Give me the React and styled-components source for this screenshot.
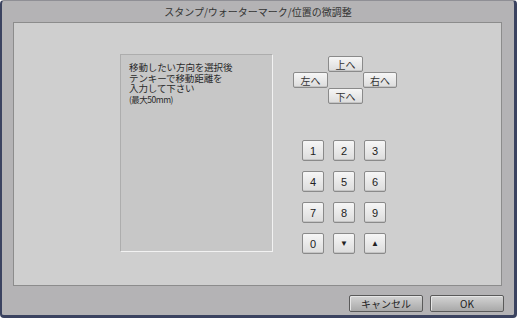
import React from 'react';
import styled, { createGlobalStyle } from 'styled-components';

const GlobalStyle = createGlobalStyle`
  html, body {
    margin: 0;
    padding: 0;
    background: #ffffff;
  }
  * { box-sizing: border-box; }
`;

const jp = `"Noto Sans CJK JP", "Noto Sans", sans-serif`;

const Window = styled.div`
  width: 517px;
  height: 318px;
  display: flex;
  flex-direction: column;
  background: #b4b3b5;
  border-left: 2px solid #3b4360;
  border-right: 3px solid #3b4360;
  border-bottom: 3px solid #3b4360;
  border-top: 1px solid #8f8f95;
  border-radius: 4px;
  font-family: ${jp};
`;

const TitleBar = styled.div`
  height: 21px;
  display: flex;
  align-items: center;
  justify-content: center;
  font-size: 10px;
  color: #333;
  padding-bottom: 1px;
`;

const Panel = styled.div`
  height: 264px;
  margin: 0 12px 0 11px;
  background: #cfcfcf;
  border: 1px solid #8c8c8c;
  display: flex;
  align-items: flex-start;
  padding: 31px 0 0 106px;
  gap: 20px;
`;

const InfoBox = styled.div`
  width: 153px;
  height: 198px;
  background: #c7c7c7;
  border: 1px solid;
  border-color: #adadad #f2f2f2 #f2f2f2 #adadad;
  padding: 7px 0 0 8px;
  color: #2a2a2a;
  letter-spacing: -0.3px;
`;

const InfoLine = styled.div`
  white-space: nowrap;
  height: 10.5px;
  font-size: ${p => (p.small ? '8.5px' : '9.5px')};
  line-height: 10.5px;
  letter-spacing: ${p => (p.small ? '-0.5px' : '-0.1px')};
`;

const Controls = styled.div`
  display: flex;
  flex-direction: column;
  padding-top: 2px;
`;

const DirGrid = styled.div`
  display: grid;
  grid-template-columns: 35px 35px 34px;
  grid-template-rows: 16px 16px 16px;
`;

const ButtonBase = styled.button`
  margin: 0;
  padding: 0;
  font-family: ${jp};
  color: #333;
  border: 1px solid #8a8a8a;
  border-radius: 2px;
  background: linear-gradient(#f6f6f6, #dcdcdc);
  box-shadow: inset 0 -1px 0 #c4c4c4;
  display: flex;
  align-items: center;
  justify-content: center;
  cursor: pointer;
`;

const DirButton = styled(ButtonBase)`
  grid-column: ${p => p.col};
  grid-row: ${p => p.row};
  height: 16px;
  font-size: 10px;
`;

const Keypad = styled.div`
  margin: 36px 0 0 9px;
  display: grid;
  grid-template-columns: repeat(3, 22px);
  grid-auto-rows: 21px;
  column-gap: 9px;
  row-gap: 10px;
`;

const Key = styled(ButtonBase)`
  font-family: "Liberation Sans", Arial, sans-serif;
  font-size: ${p => (p.arrow ? '8px' : '11px')};
  color: #222;
`;

const Footer = styled.div`
  flex: 1;
  display: flex;
  justify-content: flex-end;
  align-items: flex-start;
  gap: 7px;
  padding: 9px 10px 0 0;
`;

const FooterButton = styled.button`
  width: 74px;
  height: 17px;
  margin: 0;
  padding: 0;
  font-family: ${jp};
  font-size: 10px;
  color: #222;
  border: 1px solid #5a5a5a;
  border-radius: 2px;
  background: linear-gradient(#d4d4d4, #a8a8a8);
  box-shadow: inset 1px 1px 0 #e6e6e6;
  display: flex;
  align-items: center;
  justify-content: center;
`;

const keys = ['1', '2', '3', '4', '5', '6', '7', '8', '9', '0'];

function App() {
  return (
    <>
      <GlobalStyle />
      <Window>
        <TitleBar>スタンプ/ウォーターマーク/位置の微調整</TitleBar>
        <Panel>
          <InfoBox>
            <InfoLine>移動したい方向を選択後</InfoLine>
            <InfoLine>テンキーで移動距離を</InfoLine>
            <InfoLine>入力して下さい</InfoLine>
            <InfoLine small>(最大50mm)</InfoLine>
          </InfoBox>
          <Controls>
            <DirGrid>
              <DirButton col={2} row={1}>上へ</DirButton>
              <DirButton col={1} row={2}>左へ</DirButton>
              <DirButton col={3} row={2}>右へ</DirButton>
              <DirButton col={2} row={3}>下へ</DirButton>
            </DirGrid>
            <Keypad>
              {keys.map(k => (
                <Key key={k}>{k}</Key>
              ))}
              <Key arrow>▼</Key>
              <Key arrow>▲</Key>
            </Keypad>
          </Controls>
        </Panel>
        <Footer>
          <FooterButton>キャンセル</FooterButton>
          <FooterButton>OK</FooterButton>
        </Footer>
      </Window>
    </>
  );
}

export default App;
